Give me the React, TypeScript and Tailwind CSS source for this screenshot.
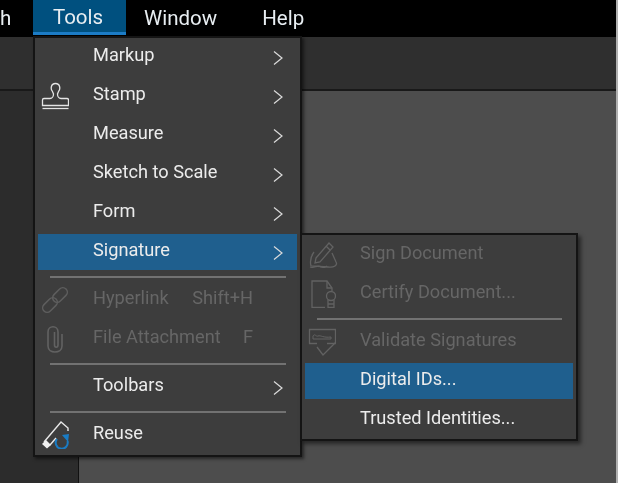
import React from "react";

const Chevron = () => (
  <svg width="12" height="18" viewBox="0 0 12 18" fill="none" stroke="#dcdcdc" strokeWidth="1.2" className="absolute right-[13px] top-[10px]">
    <path d="M2 2.5 L10 9 L2 15.5" />
  </svg>
);

const StampIcon = () => (
  <svg width="28" height="28" viewBox="0 0 28 28" fill="none" stroke="#e4e4e4" strokeWidth="1.3">
    <path d="M11.5 9.5 C9.5 7.5 9.5 1.5 14.5 1.5 C19.5 1.5 19.5 7.5 17.5 9.5 L16.5 12 C16.5 14.5 18 16.5 20 16.5 L26 16.5 C27 16.5 27.5 17 27.5 18 L27.5 23.5 L1.5 23.5 L1.5 18 C1.5 17 2 16.5 3 16.5 L9 16.5 C11 16.5 12.5 14.5 12.5 12 Z" />
    <path d="M1.5 26.5 L27.5 26.5" />
  </svg>
);
const LinkIcon = () => (
  <svg width="28" height="28" viewBox="0 0 28 28" fill="none" stroke="#5e5e5e" strokeWidth="1.5">
    <rect x="0.5" y="14.5" width="17" height="9" rx="4.5" transform="rotate(-45 9 19)" />
    <rect x="10.5" y="4.5" width="17" height="9" rx="4.5" transform="rotate(-45 19 9)" />
  </svg>
);
const ClipIcon = () => (
  <svg width="28" height="28" viewBox="0 0 28 28" fill="none" stroke="#626262" strokeWidth="1.6">
    <path d="M21 9 V21 C21 29 7 29 7 21 V7 C7 0 17 0 17 7 V20 C17 23 13.5 23 13.5 20 V7" />
  </svg>
);
const ReuseIcon = () => (
  <svg width="28" height="28" viewBox="0 0 28 28" fill="none">
    <path d="M3 21 L20 1 L27 7 L27 10" stroke="#e8e8e8" strokeWidth="1.4" />
    <path d="M9 24 L15 17" stroke="#e8e8e8" strokeWidth="1.4" />
    <path d="M1 23 L5 19 L10 24 L6 27.5 Z" fill="#f0f0f0" />
    <path d="M26.5 20 A6 6 0 1 1 16 18" stroke="#1a7cc4" strokeWidth="2" />
    <path d="M21 14 L28 13 L27 21 Z" fill="#1a7cc4" />
  </svg>
);
const SignIcon = () => (
  <svg width="30" height="30" viewBox="0 0 30 30" fill="none" stroke="#626262" strokeWidth="1.3">
    <path d="M8 18 L21 3 L25 7 L12 22 L7 23 Z" />
    <path d="M18 6 L22 10" />
    <path d="M6 12 C3 16 2 22 3 26 L20 27 C26 28 30 25 28 22 L24 13" />
    <path d="M2 27 C6 29 10 24 13 27 C15 28 18 27 19 26" />
  </svg>
);
const CertIcon = () => (
  <svg width="28" height="28" viewBox="0 0 28 28" fill="none" stroke="#626262" strokeWidth="1.3">
    <path d="M17 27.5 L4 27.5 L4 1 L19 1 L24 8 L24 11" />
    <path d="M19 1 L19 8 L24 8" />
    <circle cx="23" cy="16" r="4.5" />
    <path d="M20 20 L20 27.5 L26 27.5 L26 20 M20 24 L26 24" />
  </svg>
);
const ValidateIcon = () => (
  <svg width="28" height="28" viewBox="0 0 28 28" fill="none" stroke="#626262" strokeWidth="1.3">
    <path d="M9 15.5 L1.5 15.5 L1.5 1.5 L27.5 1.5 L27.5 15.5 L19 15.5" />
    <path d="M5 8 C7 5 8 9 10 8 C13 7 15 10 23 9 L23 11 L5 11 Z" strokeWidth="1" />
    <path d="M9 19 L15 27 L28 14" />
  </svg>
);

type RowProps = { label: string; icon?: React.ReactNode; arrow?: boolean; active?: boolean; disabled?: boolean; shortcut?: string };

const Row = ({ label, icon, arrow, active, disabled, shortcut }: RowProps) => (
  <div className={`relative flex h-9 items-center pb-[3px] ${active ? "bg-[#1f5f8e]" : ""} ${disabled ? "text-[#666666]" : "text-[#ececec]"}`}>
    <div className="flex w-[55px] shrink-0 items-center pl-[3px] pt-[3px]">{icon}</div>
    <span>{label}</span>
    {shortcut && <span className="ml-auto mr-[44px]">{shortcut}</span>}
    {arrow && <Chevron />}
  </div>
);

const Sep = ({ inset }: { inset: string }) => <div className={`${inset} h-[2px] bg-[#727272]`} />;

export default function App() {
  return (
    <div className="relative flex h-[483px] w-[618px] overflow-hidden bg-[#4d4d4d] font-['Roboto',sans-serif] text-[18.2px] leading-none blur-[0.35px]">
      <div className="flex min-w-0 flex-1 flex-col">
        <div className="flex h-[37px] shrink-0 bg-black text-[20.5px] text-[#e8eef2]">
          <div className="flex w-[33px] items-center overflow-hidden pr-[23px]"><span>h</span></div>
          <div className="flex h-[35px] w-[93px] items-center justify-center border-b-[3px] border-[#1c7cc6] bg-[#00507f] pr-[3px] pt-[2px]">Tools</div>
          <div className="ml-[18px] flex h-[37px] items-center">Window</div>
          <div className="ml-[45px] flex h-[37px] items-center">Help</div>
        </div>
        <div className="h-[54px] shrink-0 border-b-2 border-[#191919] bg-[#2f2f2f]" />
        <div className="flex flex-1">
          <div className="w-[79px] border-r border-[#111111] bg-[#2c2c2c]" />
          <div className="flex-1 bg-[#4d4d4d]" />
        </div>
      </div>
      <div className="w-[2px] bg-[#b0b0b0]" />

      <div className="absolute left-[33px] top-[36px] w-[269px] border-2 border-[#141414] bg-[#3d3d3d] px-[3px] pb-[2px] pt-[1px] shadow-[2px_2px_3px_rgba(0,0,0,0.5)]">
        <div className="flex flex-col gap-[3px]">
          <Row label="Markup" arrow />
          <Row label="Stamp" arrow icon={<StampIcon />} />
          <Row label="Measure" arrow />
          <Row label="Sketch to Scale" arrow />
          <Row label="Form" arrow />
          <Row label="Signature" arrow active />
        </div>
        <div className="pb-1 pt-[6px]"><Sep inset="ml-3 mr-[11px]" /></div>
        <div className="flex flex-col gap-[3px]">
          <Row label="Hyperlink" disabled icon={<LinkIcon />} shortcut="Shift+H" />
          <Row label="File Attachment" disabled icon={<ClipIcon />} shortcut="F" />
        </div>
        <div className="pb-1 pt-[6px]"><Sep inset="ml-3 mr-[11px]" /></div>
        <Row label="Toolbars" arrow />
        <div className="pb-1 pt-[6px]"><Sep inset="ml-3 mr-[11px]" /></div>
        <Row label="Reuse" icon={<ReuseIcon />} />
      </div>

      <div className="absolute left-[300px] top-[233px] w-[278px] border-2 border-[#141414] bg-[#3d3d3d] px-[3px] pb-[1px] pt-[2px] shadow-[3px_3px_4px_rgba(0,0,0,0.5)]">
        <div className="flex flex-col gap-[3px]">
          <Row label="Sign Document" disabled icon={<SignIcon />} />
          <Row label="Certify Document..." disabled icon={<CertIcon />} />
        </div>
        <div className="pb-1 pt-[6px]"><Sep inset="ml-3 mr-[11px]" /></div>
        <div className="flex flex-col gap-[3px]">
          <Row label="Validate Signatures" disabled icon={<ValidateIcon />} />
          <Row label="Digital IDs..." active />
          <Row label="Trusted Identities..." />
        </div>
      </div>
    </div>
  );
}
